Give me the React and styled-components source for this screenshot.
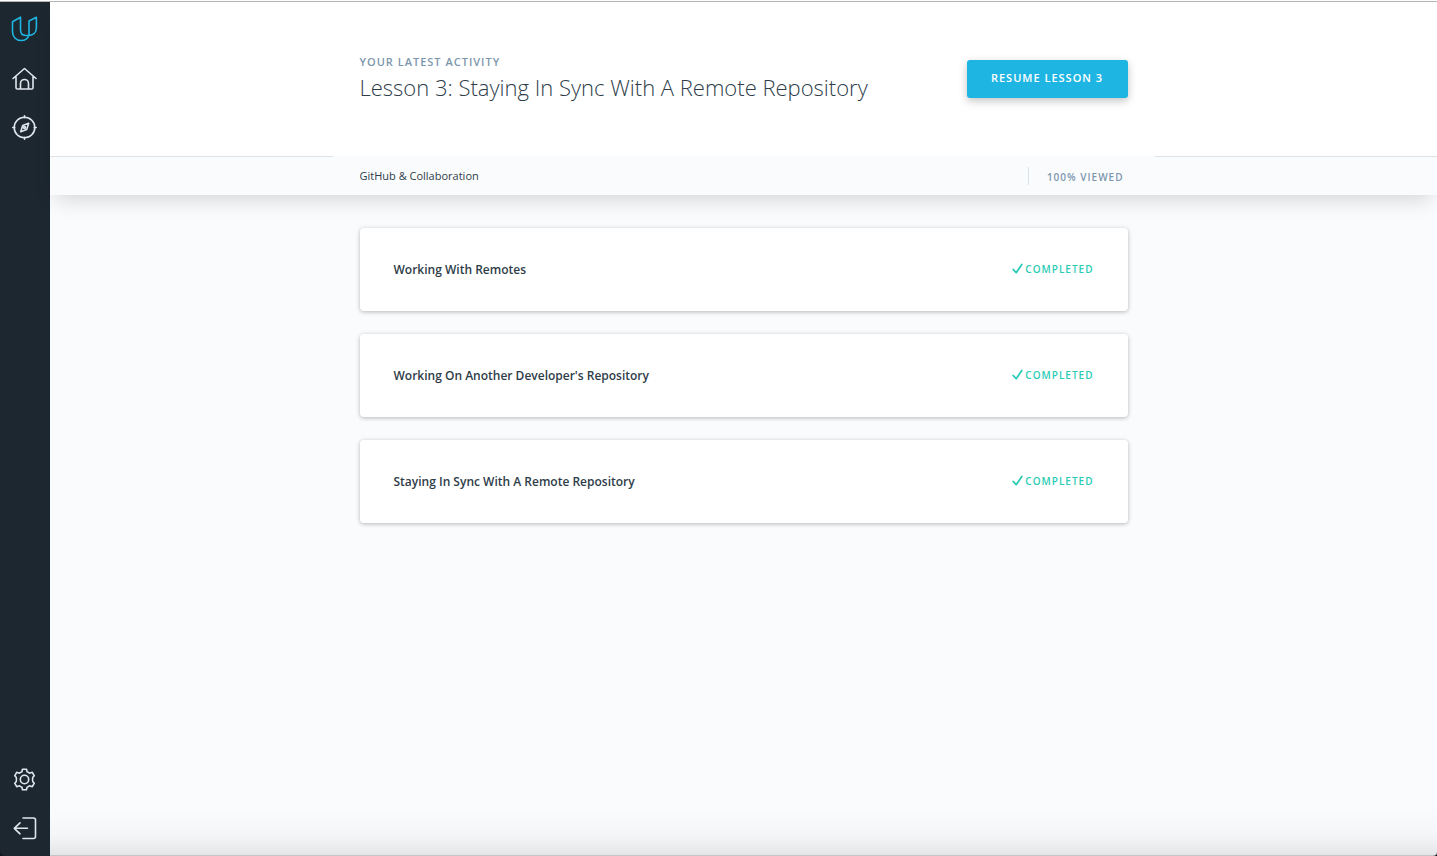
import React from "react";
import styled, { createGlobalStyle } from "styled-components";

const GlobalStyle = createGlobalStyle`
  *, *::before, *::after { box-sizing: border-box; }
  body {
    margin: 0;
    background: #fafbfd;
    color: #2e3d49;
    font-family: "Open Sans", "Noto Sans", sans-serif;
  }
  h1, h2, p, ul { margin: 0; padding: 0; }
`;

const Shell = styled.div`
  display: flex;
  min-height: 100vh;
  padding-top: 1px;
  border-top: 1px solid #fff;
  background: #12161c;
  box-shadow: inset 0 1px 0 #b3b5b7;
`;

const Sidebar = styled.nav`
  flex: 0 0 50px;
  display: flex;
  flex-direction: column;
  justify-content: space-between;
  padding: 13px 0;
  background: #1d272f;
  border-bottom-left-radius: 5px;
`;

const NavGroup = styled.div`
  display: flex;
  flex-direction: column;
  align-items: center;
  gap: 21px;
`;

const NavLink = styled.a`
  display: block;
  width: 28px;
  height: 28px;
  color: ${(p) => (p.$brand ? "#1fb5e2" : "#dfe6ee")};
  svg { display: block; }
`;

const Main = styled.main`
  flex: 1;
  min-width: 0;
  display: flex;
  flex-direction: column;
  background: linear-gradient(to top, #e4e5e7 0, #f5f6f7 20px, #fafbfd 46px);
  border-bottom: 1px solid #c4c5c7;
  border-bottom-right-radius: 4px;
`;

const Top = styled.header`
  background: #fff;
  box-shadow: 0 10px 20px -6px rgba(0, 0, 0, 0.16);
`;

const Container = styled.div`
  width: 100%;
  max-width: 768px;
  margin: 0 auto;
`;

const Hero = styled(Container)`
  display: flex;
  justify-content: space-between;
  align-items: flex-start;
  height: 154px;
  padding-top: 50px;
`;

const Eyebrow = styled.p`
  color: #7d97ad;
  font-size: 11px;
  font-weight: 600;
  line-height: 20px;
  letter-spacing: 1px;
  text-transform: uppercase;
`;

const Title = styled.h1`
  font-size: 22px;
  font-weight: 300;
  line-height: 30px;
`;

const ResumeButton = styled.button`
  width: 161px;
  height: 38px;
  margin-top: 8px;
  padding: 0 0 2px;
  border: 0;
  border-radius: 3px;
  background: #1fb5e2;
  box-shadow: 0 3px 8px rgba(0, 0, 0, 0.24);
  color: #fff;
  font: 600 11px/20px "Open Sans", sans-serif;
  letter-spacing: 1px;
  text-transform: uppercase;
`;

const Band = styled.div`
  display: flex;
  height: 39px;
  background: #fafbfd;
  &::before, &::after {
    content: "";
    flex: 1;
    border-top: 1px solid #dbe2e8;
  }
`;

const BandInner = styled.div`
  flex: 0 1 822px;
  display: flex;
  justify-content: space-between;
  align-items: center;
  padding: 0 27px;
`;

const Course = styled.p`
  font-size: 11px;
  line-height: 20px;
`;

const Viewed = styled.p`
  padding: 2px 4px 0 18px;
  border-left: 1px solid #dbe2e8;
  color: #7d97ad;
  font-size: 10px;
  font-weight: 600;
  line-height: 16px;
  letter-spacing: 1px;
`;

const Lessons = styled.ul`
  width: 100%;
  max-width: 768px;
  margin: 33px auto;
  display: flex;
  flex-direction: column;
  gap: 23px;
  list-style: none;
`;

const Card = styled.li`
  display: flex;
  justify-content: space-between;
  align-items: center;
  height: 83px;
  padding: 0 34px;
  border-radius: 4px;
  background: #fff;
  box-shadow: 0 1px 4px rgba(0, 0, 0, 0.28);
`;

const LessonName = styled.h2`
  font-size: 12px;
  font-weight: 600;
  line-height: 20px;
`;

const Status = styled.span`
  display: flex;
  align-items: center;
  gap: 2px;
  padding-bottom: 2px;
  color: #2bccb5;
  font-size: 10px;
  font-weight: 600;
  line-height: 20px;
  letter-spacing: 1px;
  text-transform: uppercase;
`;

const Icon = ({ children }) => (
  <svg width="28" height="28" viewBox="0 0 28 28" fill="none" stroke="currentColor"
    strokeWidth="1.6" strokeLinecap="round" strokeLinejoin="round" aria-hidden="true">
    {children}
  </svg>
);

const LogoIcon = () => (
  <Icon>
    <path d="M1.500 6.800 9.500 2.200v12.300c0 3.800 2 6 5.200 6h2.300c5.200 0 8.400-3 8.400-7.800V2.200L18 6v13.500c0 3.500-3.800 6-8 6-5 0-8.500-3.800-8.500-8.700z" />
  </Icon>
);

const HomeIcon = () => (
  <Icon>
    <path d="M2 14.500 13.500 4.500l11.500 10M5 12.500v11.200c0 .9.500 1.300 1.300 1.300h14.400c.8 0 1.300-.4 1.300-1.300V12.500M9.500 25v-5.500a4 4 0 0 1 8 0V25" />
  </Icon>
);

const CompassIcon = () => (
  <Icon>
    <circle cx="13.500" cy="14.500" r="10.300" />
    <path d="M13.500 2.800v2M13.500 24.200v2M1.800 14.500h2M23.200 14.500h2M17.700 10.300l-6 2.200-2 6.200 6-2.200z" />
    <circle cx="13.500" cy="14.500" r="1" />
  </Icon>
);

const GearIcon = () => (
  <Icon>
    <circle cx="13.500" cy="13.500" r="4.200" />
    <path d="M11.500 3.200h4l.6 2.600q1.300.5 2.400 1.400l2.800-.9 2 3.500-1.500 1.500q-.6 2.200 0 4.400l1.500 1.500-2 3.500-2.800-.9q-1.100.9-2.400 1.400l-.6 2.600h-4l-.6-2.600q-1.300-.5-2.400-1.400l-2.800.9-2-3.500 1.500-1.500q.6-2.200 0-4.400l-1.500-1.500 2-3.500 2.800.9q1.100-.9 2.400-1.400z" />
  </Icon>
);

const ExitIcon = () => (
  <Icon>
    <path d="M12 3h10.500c1.300 0 2 .7 2 2v16.500c0 1.300-.7 2-2 2H12M16.500 13.300H3.500M9 7.800l-5.700 5.500L9 18.800" />
  </Icon>
);

const CheckIcon = () => (
  <svg width="11" height="12" viewBox="0 0 11 12" fill="none" stroke="currentColor"
    strokeWidth="1.8" strokeLinecap="round" strokeLinejoin="round" aria-hidden="true">
    <path d="M1.200 6.500 4.200 9.700 9.800 1.400" />
  </svg>
);

const lessons = [
  "Working With Remotes",
  "Working On Another Developer's Repository",
  "Staying In Sync With A Remote Repository",
];

export default function App() {
  return (
    <>
      <GlobalStyle />
      <Shell>
        <Sidebar aria-label="Main">
          <NavGroup>
            <NavLink href="#" $brand aria-label="Udacity"><LogoIcon /></NavLink>
            <NavLink href="#home" aria-label="Home"><HomeIcon /></NavLink>
            <NavLink href="#catalog" aria-label="Catalog"><CompassIcon /></NavLink>
          </NavGroup>
          <NavGroup>
            <NavLink href="#settings" aria-label="Settings"><GearIcon /></NavLink>
            <NavLink href="#logout" aria-label="Log out"><ExitIcon /></NavLink>
          </NavGroup>
        </Sidebar>
        <Main>
          <Top>
            <Hero>
              <div>
                <Eyebrow>Your latest activity</Eyebrow>
                <Title>Lesson 3: Staying In Sync With A Remote Repository</Title>
              </div>
              <ResumeButton type="button">Resume Lesson 3</ResumeButton>
            </Hero>
            <Band>
              <BandInner>
                <Course>GitHub &amp; Collaboration</Course>
                <Viewed>100% VIEWED</Viewed>
              </BandInner>
            </Band>
          </Top>
          <Lessons>
            {lessons.map((name) => (
              <Card key={name}>
                <LessonName>{name}</LessonName>
                <Status><CheckIcon />Completed</Status>
              </Card>
            ))}
          </Lessons>
        </Main>
      </Shell>
    </>
  );
}
